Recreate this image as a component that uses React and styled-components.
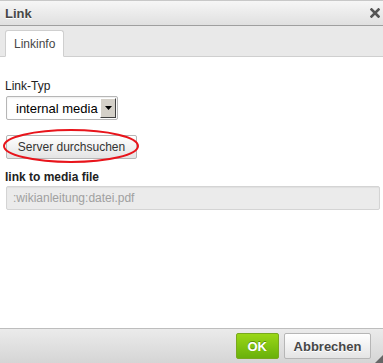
import React from "react";
import styled, { createGlobalStyle } from "styled-components";

const Global = createGlobalStyle`
  html, body { margin: 0; padding: 0; background: #fff; }
  body { font-family: "Liberation Sans", Arial, sans-serif; font-size: 12px; color: #333; }
`;

const Dialog = styled.div`
  width: 383px;
  height: 363px;
  display: flex;
  flex-direction: column;
  overflow: hidden;
  position: relative;
  background: #fff;
`;

const TitleBar = styled.div`
  height: 24px;
  flex: none;
  display: flex;
  align-items: center;
  justify-content: space-between;
  padding: 0 3px 0 5px;
  border-top: 1px solid #c8c8c8;
  border-bottom: 1px solid #9f9f9f;
  background: linear-gradient(#f6f6f6, #e0e0e0);
`;

const Title = styled.span`
  font-weight: bold;
  font-size: 13px;
  color: #474747;
  text-shadow: 0 1px 0 #fff;
`;

const Close = styled.svg`
  width: 10px;
  height: 10px;
`;

const TabBar = styled.div`
  height: 30px;
  flex: none;
  display: flex;
  align-items: flex-end;
  padding-left: 5px;
  background: #e9e9e9;
  border-bottom: 1px solid #cfcfcf;
`;

const Tab = styled.div`
  height: 25px;
  margin-bottom: -1px;
  padding: 0 8px;
  display: flex;
  align-items: center;
  background: #fff;
  border: 1px solid #cfcfcf;
  border-bottom: 1px solid #fff;
  border-radius: 3px 3px 0 0;
  font-size: 12px;
  color: #474747;
`;

const Content = styled.div`
  flex: 1;
  padding: 22px 2px 0 6px;
  display: flex;
  flex-direction: column;
  align-items: flex-start;
`;

const Label = styled.div`
  font-size: 12px;
  color: #222;
  margin-left: -1px;
  font-weight: ${(p) => (p.$bold ? "bold" : "normal")};
`;

const Select = styled.div`
  margin-top: 3px;
  width: 110px;
  height: 22px;
  display: flex;
  align-items: center;
  justify-content: space-between;
  border: 1px solid #b6b6b6;
  border-radius: 2px;
  background: #fff;
  box-shadow: inset 0 1px 2px rgba(0,0,0,0.08);
`;

const SelectText = styled.span`
  padding-left: 9px;
  font-size: 13px;
  color: #000;
`;

const Arrow = styled.div`
  width: 16px;
  height: 20px;
  margin-right: 1px;
  display: flex;
  align-items: center;
  justify-content: center;
  background: #d4d0c8;
  border: 1px solid;
  border-color: #fff #404040 #404040 #fff;
  box-sizing: border-box;
`;

const ButtonWrap = styled.div`
  position: relative;
  margin-top: 15px;
`;

const Button = styled.div`
  width: 129px;
  height: 22px;
  display: flex;
  align-items: center;
  justify-content: center;
  border: 1px solid #b6b6b6;
  border-radius: 2px;
  background: linear-gradient(#fff, #e4e4e4);
  font-size: 12px;
  color: #333;
`;

const Ellipse = styled.svg`
  position: absolute;
  left: -4px;
  top: -7px;
  width: 138px;
  height: 36px;
  overflow: visible;
`;

const FileLabel = styled(Label)`
  margin-top: 11px;
`;

const Input = styled.div`
  margin-top: 2px;
  width: 374px;
  height: 24px;
  box-sizing: border-box;
  display: flex;
  align-items: center;
  padding-left: 6px;
  border: 1px solid #d4d4d4;
  border-radius: 2px;
  background: #ebebeb;
  box-shadow: inset 0 1px 1px rgba(0,0,0,0.05);
  color: #a0a0a0;
  font-size: 12px;
`;

const Footer = styled.div`
  height: 34px;
  flex: none;
  display: flex;
  align-items: center;
  justify-content: flex-end;
  gap: 5px;
  padding-right: 12px;
  border-top: 1px solid #bdbdbd;
  background: linear-gradient(#ebebeb, #d5d5d5);
  position: relative;
`;

const FooterButton = styled.div`
  height: 26px;
  box-sizing: border-box;
  display: flex;
  align-items: center;
  justify-content: center;
  padding: 0 ${(p) => (p.$primary ? "11px" : "8px")};
  min-width: ${(p) => (p.$primary ? "42px" : "87px")};
  border-radius: 2px;
  border: 1px solid ${(p) => (p.$primary ? "#79a91e" : "#b6b6b6")};
  background: ${(p) =>
    p.$primary ? "linear-gradient(#9ad717, #69b10b)" : "linear-gradient(#fff, #e4e4e4)"};
  color: ${(p) => (p.$primary ? "#fff" : "#474747")};
  font-weight: bold;
  font-size: 13px;
  text-shadow: ${(p) => (p.$primary ? "0 -1px 0 #5a8c0a" : "0 1px 0 #fff")};
`;

const Grip = styled.svg`
  position: absolute;
  right: 0;
  bottom: 0;
  width: 8px;
  height: 8px;
`;

export default function App() {
  return (
    <>
      <Global />
      <Dialog>
        <TitleBar>
          <Title>Link</Title>
          <Close viewBox="0 0 10 10">
            <path d="M1.5 1.5 L8.5 8.5 M8.5 1.5 L1.5 8.5" stroke="#555" strokeWidth="2.6" strokeLinecap="square" />
          </Close>
        </TitleBar>
        <TabBar>
          <Tab>Linkinfo</Tab>
        </TabBar>
        <Content>
          <Label>Link-Typ</Label>
          <Select>
            <SelectText>internal media</SelectText>
            <Arrow>
              <svg width="7" height="4" viewBox="0 0 7 4">
                <path d="M0 0 H7 L3.5 4 Z" fill="#000" />
              </svg>
            </Arrow>
          </Select>
          <ButtonWrap>
            <Button>Server durchsuchen</Button>
            <Ellipse viewBox="0 0 138 36">
              <ellipse cx="69" cy="18" rx="67" ry="16" fill="none" stroke="#e8141b" strokeWidth="2" />
            </Ellipse>
          </ButtonWrap>
          <FileLabel $bold>link to media file</FileLabel>
          <Input>:wikianleitung:datei.pdf</Input>
        </Content>
        <Footer>
          <FooterButton $primary>OK</FooterButton>
          <FooterButton>Abbrechen</FooterButton>
          <Grip viewBox="0 0 8 8">
            <path d="M8 0 L8 8 L0 8 Z" fill="#666" />
          </Grip>
        </Footer>
      </Dialog>
    </>
  );
}
